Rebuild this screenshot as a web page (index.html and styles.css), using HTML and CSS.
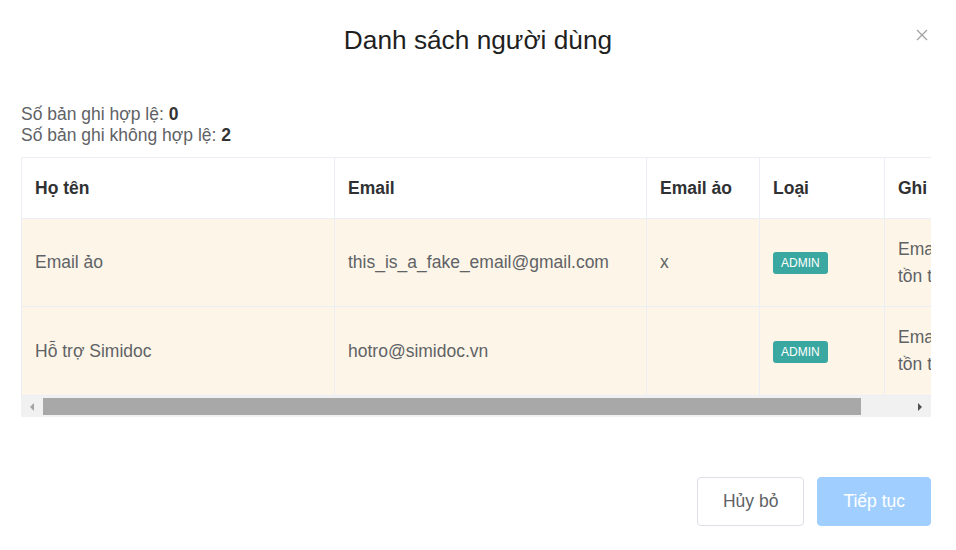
FILE: index.html
```html
<!DOCTYPE html>
<html lang="vi">
<head>
  <meta charset="UTF-8">
  <title>Danh sách người dùng</title>
  <meta name="viewport" content="width=device-width, initial-scale=1.0">
  <link rel="stylesheet" href="styles.css">
</head>
<body>
  <div class="dialog">
    <div class="dialog-header">
      <h1>Danh sách người dùng</h1>
      <button type="button" class="close" aria-label="Đóng">
        <svg width="12" height="12" viewBox="0 0 12 12"><path d="M1 1L11 11M11 1L1 11" stroke="#a0a0a0" stroke-width="1.2" fill="none"/></svg>
      </button>
    </div>

    <div class="dialog-body">
      <div class="summary">
        <p>Số bản ghi hợp lệ: <b>0</b></p>
        <p>Số bản ghi không hợp lệ: <b>2</b></p>
      </div>

      <div class="table-wrap">
        <div class="table-view">
          <table class="users">
            <colgroup>
              <col style="width:313px">
              <col style="width:312px">
              <col style="width:113px">
              <col style="width:125px">
              <col style="width:112px">
            </colgroup>
            <thead>
              <tr>
                <th>Họ tên</th>
                <th>Email</th>
                <th>Email ảo</th>
                <th>Loại</th>
                <th>Ghi chú</th>
              </tr>
            </thead>
            <tbody>
              <tr>
                <td>Email ảo</td>
                <td>this_is_a_fake_email@gmail.com</td>
                <td>x</td>
                <td><span class="tag">ADMIN</span></td>
                <td>Email đã tồn tại</td>
              </tr>
              <tr>
                <td>Hỗ trợ Simidoc</td>
                <td>hotro@simidoc.vn</td>
                <td></td>
                <td><span class="tag">ADMIN</span></td>
                <td>Email đã tồn tại</td>
              </tr>
            </tbody>
          </table>
        </div>
        <!-- thanh cuộn ngang -->
        <div class="scrollbar">
          <span class="arrow arrow-left"></span>
          <div class="track"><div class="thumb"></div></div>
          <span class="arrow arrow-right"></span>
        </div>
      </div>
    </div>

    <div class="dialog-footer">
      <button type="button" class="btn">Hủy bỏ</button>
      <button type="button" class="btn btn-primary" disabled>Tiếp tục</button>
    </div>
  </div>
</body>
</html>
```

FILE: styles.css
```css
:root {
  --text: #606266;
  --title: #1f1f1f;
  --head: #303133;
  --border: #ebeef5;
  --row-bg: #fdf6e8;
  --tag: #3aa8a0;
  --primary-off: #a0cfff;
}
body {
  margin: 0;
  background: #fff;
  font-family: 'Liberation Sans', Arial, sans-serif;
  color: var(--text);
}
.dialog {
  width: 956px;
}
.dialog-header {
  position: relative;
  padding: 20px 21px 0 21px;
  height: 60px;
  box-sizing: border-box;
}
.dialog-header h1 {
  margin: 0;
  text-align: center;
  font-size: 26.25px;
  line-height: 40px;
  font-weight: 400;
  color: var(--title);
}
.close {
  position: absolute;
  top: 29px;
  right: 28px;
  padding: 0;
  border: none;
  background: none;
  width: 12px;
  height: 12px;
  cursor: pointer;
  display: flex;
}
.dialog-body {
  padding: 44px 25px 0 21px;
}
.summary p {
  margin: 0;
  font-size: 17.5px;
  line-height: 21px;
}
.summary b {
  color: #333;
}
.table-wrap {
  margin-top: 11px;
  width: 910px;
}
.table-view {
  overflow: hidden;
  width: 910px;
}
.users {
  border-collapse: collapse;
  table-layout: fixed;
  width: 975px;
  font-size: 17.5px;
}
.users th,
.users td {
  border: 1px solid var(--border);
  text-align: left;
  vertical-align: middle;
  padding: 0 13px;
  box-sizing: border-box;
}
.users th {
  height: 61px;
  color: var(--head);
  font-weight: 700;
  white-space: nowrap;
  overflow: hidden;
}
.users td {
  height: 88px;
  line-height: 27px;
  background: var(--row-bg);
  color: var(--text);
}
.users tbody tr:last-child td {
  height: 89px;
}
.tag {
  display: inline-block;
  background: var(--tag);
  color: #fff;
  font-size: 12px;
  line-height: 22px;
  height: 22px;
  padding: 0 8px;
  border-radius: 3px;
  vertical-align: middle;
}
.scrollbar {
  display: flex;
  align-items: center;
  height: 21px;
  background: #f1f1f1;
}
.arrow {
  width: 22px;
  height: 21px;
  display: flex;
  align-items: center;
  justify-content: center;
}
.arrow::before {
  content: "";
  border-top: 4px solid transparent;
  border-bottom: 4px solid transparent;
}
.arrow-left::before {
  border-right: 4px solid #a3a3a3;
}
.arrow-right::before {
  border-left: 4px solid #505050;
}
.track {
  flex: 1;
  height: 21px;
  display: flex;
  align-items: center;
}
.thumb {
  width: 818px;
  height: 17px;
  background: #a8a8a8;
}
.dialog-footer {
  display: flex;
  justify-content: flex-end;
  gap: 13px;
  padding: 60px 25px 0 0;
}
.btn {
  font-family: 'Liberation Sans', Arial, sans-serif;
  font-size: 17.5px;
  height: 49px;
  padding: 0 25px;
  border: 1px solid #dcdfe6;
  border-radius: 4px;
  background: #fff;
  color: var(--text);
  cursor: pointer;
}
.btn-primary {
  background: var(--primary-off);
  border-color: var(--primary-off);
  color: #fff;
  cursor: not-allowed;
}
```
